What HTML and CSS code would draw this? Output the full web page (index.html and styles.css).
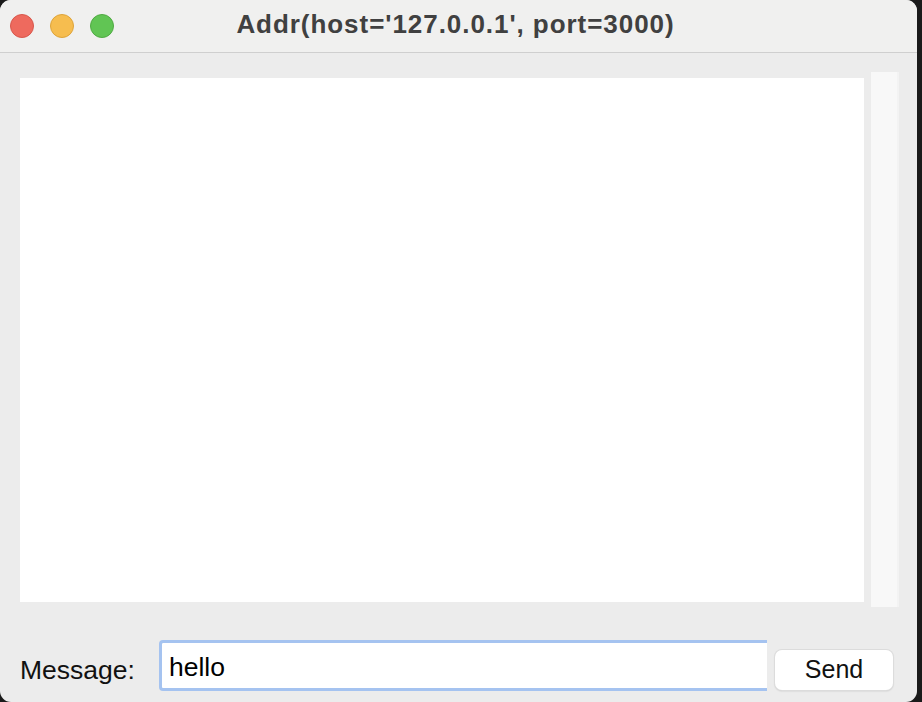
FILE: index.html
```html
<!DOCTYPE html>
<html>
<head>
<meta charset="utf-8">
<link rel="stylesheet" href="styles.css">
</head>
<body>
<div class="window">
  <div class="titlebar">
    <div class="lights">
      <span class="light red"></span>
      <span class="light yellow"></span>
      <span class="light green"></span>
    </div>
    <div class="title">Addr(host='127.0.0.1', port=3000)</div>
  </div>
  <div class="content">
    <div class="log-row">
      <div class="log"></div>
      <div class="scrollbar"></div>
    </div>
    <div class="input-row">
      <label class="label">Message:</label>
      <div class="entry"><span class="entry-text">hello</span></div>
      <button class="send">Send</button>
    </div>
  </div>
</div>
</body>
</html>
```
FILE: styles.css
```css
html, body {
  margin: 0;
  padding: 0;
  background: #1a1a1a;
  width: 922px;
  height: 702px;
  overflow: hidden;
}
.window {
  width: 917px;
  height: 702px;
  background: #ececec;
  border-radius: 11px;
  overflow: hidden;
  display: flex;
  flex-direction: column;
  font-family: "Liberation Sans", Arial, sans-serif;
}
.titlebar {
  height: 52px;
  flex: none;
  background: #f0f0ef;
  border-bottom: 1px solid #cfcfcf;
  display: flex;
  align-items: center;
  position: relative;
}
.lights {
  display: flex;
  gap: 16px;
  padding-left: 10px;
}
.light {
  width: 22px;
  height: 22px;
  border-radius: 50%;
  display: block;
}
.red { background: #ee6a5e; border: 1px solid #d8574c; }
.yellow { background: #f6bd4f; border: 1px solid #dea43a; }
.green { background: #61c554; border: 1px solid #50aa43; }
.title {
  position: absolute;
  left: 0;
  right: 6px;
  top: 0;
  height: 49px;
  line-height: 49px;
  text-align: center;
  font-weight: bold;
  font-size: 26px;
  color: #404040;
  letter-spacing: 0.95px;
}
.content {
  flex: 1;
  display: flex;
  flex-direction: column;
}
.log-row {
  display: flex;
  align-items: flex-start;
  padding-left: 20px;
  padding-top: 19px;
}
.log {
  width: 844px;
  height: 524px;
  margin-top: 6px;
  background: #ffffff;
}
.scrollbar {
  width: 26px;
  height: 535px;
  margin-left: 7px;
  background: #f8f8f8;
  border-right: 2px solid #f3f3f3;
}
.input-row {
  display: flex;
  align-items: flex-end;
  padding-left: 20px;
  margin-top: 33px;
}
.label {
  font-size: 26.5px;
  color: #111;
  width: 139px;
  padding-bottom: 5px;
}
.entry {
  width: 605px;
  height: 45px;
  background: #fff;
  border: 3px solid #a5c3f0;
  border-right: none;
  border-radius: 4px 0 0 4px;
  display: flex;
  align-items: center;
  box-sizing: content-box;
}
.entry-text {
  font-size: 26.5px;
  color: #000;
  padding-left: 7px;
  padding-top: 3px;
}
.send {
  margin-left: 8px;
  width: 118px;
  height: 40px;
  margin-bottom: 1px;
  background: #fff;
  border: none;
  border-radius: 7px;
  box-shadow: 0 0 0 1px #dcdcdc, 0 1px 2px rgba(0,0,0,0.2);
  font-family: "Liberation Sans", Arial, sans-serif;
  font-size: 25px;
  color: #111;
  padding: 0 0 2px 0;
}
```
